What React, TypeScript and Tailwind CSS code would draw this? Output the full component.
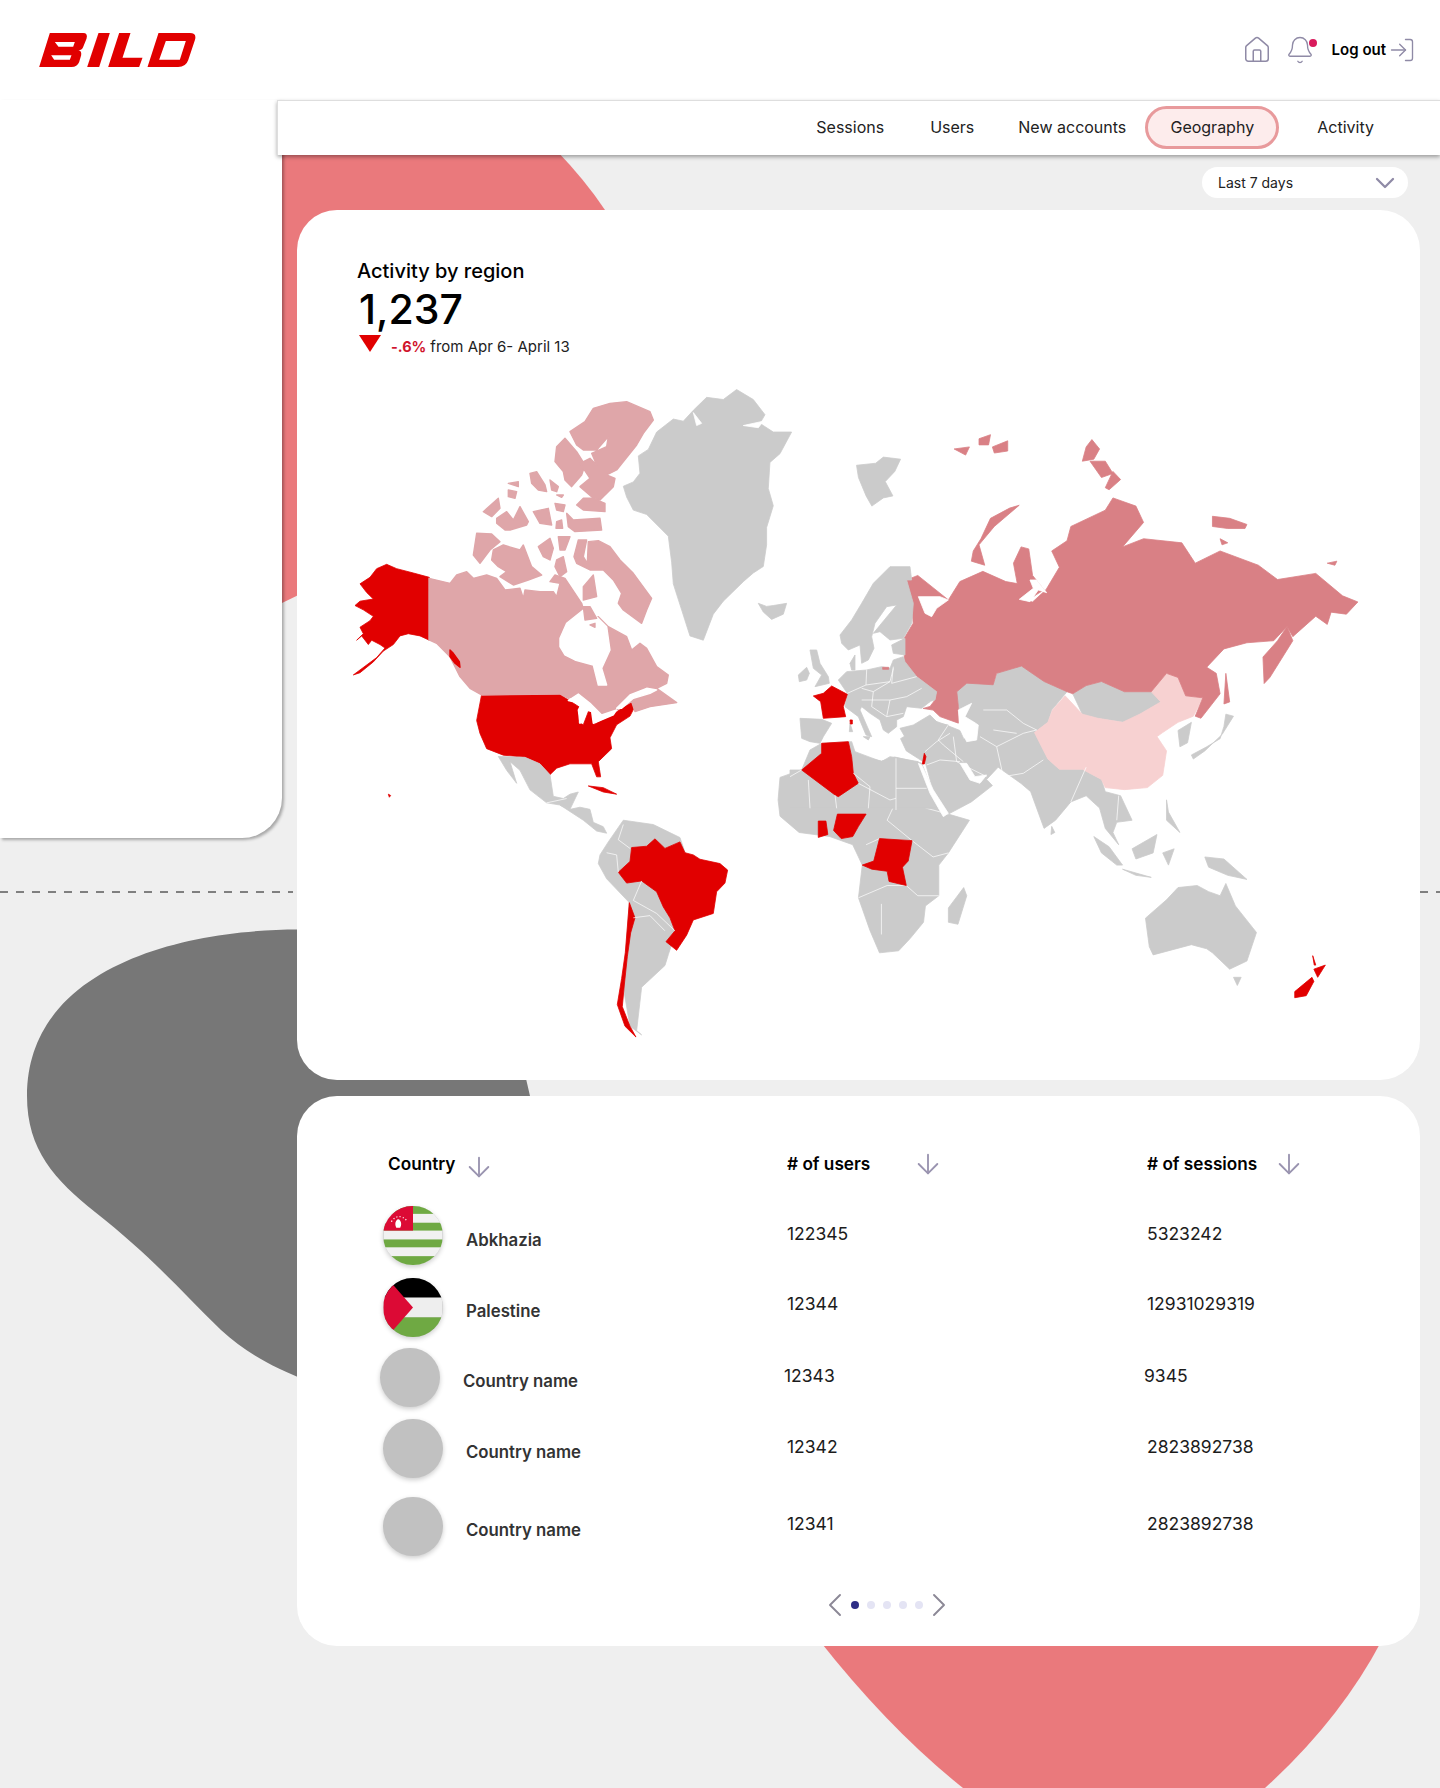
import React from "react";
import {ArrowDown, Bell, ChevronDown, ChevronLeft, ChevronRight, House, LogIn} from "lucide-react";

const RED = "#e10000";
const GREY = "#cbcbcb";
const CANADA = "#dfa6a9";
const RUSSIA = "#d98085";
const CHINA = "#f7d1d1";
const WHITE = "#ffffff";

type Shape = [string, string];

// americas + greenland
const westShapes: Shape[] = [
    [GREY, "M850 245 L880 235 L900 215 L895 175 L925 160 L950 120 L1000 90 L1030 95 L1060 70 L1100 40 L1150 45 L1190 22 L1240 45 L1275 80 L1260 100 L1300 120 L1355 120 L1320 170 L1290 190 L1285 250 L1300 290 L1280 340 L1280 380 L1270 430 L1240 445 L1210 465 L1150 510 L1120 540 L1090 600 L1050 590 L1025 530 L1000 470 L995 420 L985 360 L920 310 L880 300 L860 270 Z"],
    [WHITE, "M1060 75 L1085 100 L1070 105 Z"],
    [WHITE, "M1210 105 L1270 95 L1255 110 Z"],
    [GREY, "M1255 515 L1280 522 L1300 520 L1340 515 L1330 540 L1295 552 L1270 535 Z"],
    // alaska
    [RED, "M268 455 L268 600 L240 590 L205 585 L180 590 L160 610 L130 625 L100 650 L60 675 L40 680 L75 660 L110 640 L135 618 L120 610 L95 600 L85 610 L65 590 L50 600 L70 585 L60 570 L90 555 L100 545 L70 530 L45 520 L60 510 L100 505 L80 490 L60 470 L90 455 L110 435 L140 425 L170 435 L220 445 Z"],
    // usa
    [RED, "M425 725 L660 725 L690 740 L720 755 L715 790 L730 795 L750 755 L780 775 L760 795 L820 770 L870 745 L890 745 L870 775 L830 795 L810 825 L815 850 L775 880 L782 915 L770 915 L755 885 L690 885 L650 895 L630 910 L600 885 L555 870 L490 865 L440 850 L420 815 L410 785 Z"],
    [RED, "M745 936 L790 940 L830 955 L790 950 Z"],
    [RED, "M145 955 L152 958 L148 962 Z"],
    // mexico and central america
    [GREY, "M475 868 L555 870 L600 885 L630 910 L640 960 L670 965 L690 955 L715 950 L690 990 L660 980 L620 975 L570 945 L540 900 L510 880 L530 930 L500 900 Z"],
    [GREY, "M660 980 L690 990 L720 985 L750 990 L760 1020 L790 1030 L800 1045 L770 1040 L730 1015 Z"],
    // south america
    [GREY, "M780 1095 L805 1065 L850 1015 L940 1025 L1020 1055 L1040 1100 L1000 1290 L985 1325 L975 1350 L905 1400 L890 1500 L905 1510 L870 1490 L850 1400 L868 1205 L800 1150 L775 1115 Z"],
    [RED, "M835 1135 L870 1110 L875 1078 L920 1075 L945 1058 L975 1080 L1020 1065 L1035 1090 L1060 1095 L1080 1105 L1140 1115 L1163 1130 L1155 1160 L1130 1180 L1120 1230 L1060 1245 L1040 1280 L1010 1315 L978 1295 L1005 1270 L990 1240 L970 1215 L950 1180 L905 1155 L860 1160 Z"],
    [RED, "M868 1205 L885 1240 L872 1275 L862 1330 L853 1395 L847 1445 L870 1490 L888 1515 L855 1490 L832 1440 L845 1380 L856 1320 Z"],
];

const westLines = [
    "M850 1025 L835 1060 L870 1080",
    "M800 1090 L830 1095 L835 1135",
    "M905 1155 L880 1200 L950 1230 L1005 1270",
    "M880 1240 L930 1235 L975 1270",
    "M620 975 L680 965",
];

// canada, from the closer crop
const canadaShapes: Shape[] = [
    [CANADA, "M-63 565 L0 580 L20 555 L50 545 L70 565 L110 555 L140 565 L165 600 L210 595 L220 625 L225 600 L270 605 L310 605 L320 620 L330 580 L300 575 L315 555 L345 565 L395 640 L410 690 L445 680 L475 710 L530 740 L545 780 L570 760 L590 775 L620 830 L655 855 L650 880 L620 895 L680 938 L600 950 L555 965 L545 935 L500 960 L455 975 L420 945 L385 915 L355 925 L330 912 L95 915 L60 895 L30 860 L0 800 L-40 760 L-63 750 Z"],
    [WHITE, "M330 745 L350 700 L400 660 L440 680 L470 710 L480 780 L455 835 L470 885 L445 885 L430 825 L375 810 L345 795 L330 770 Z"],
    [WHITE, "M500 955 L540 915 L590 895 L620 900 L600 910 L550 925 L515 955 Z"],
    [CANADA, "M80 430 L125 432 L150 455 L120 480 L90 520 L70 495 Z"],
    [CANADA, "M130 480 L160 465 L210 480 L220 465 L245 530 L275 555 L235 570 L190 585 L150 560 L170 545 L145 530 L125 510 Z"],
    [CANADA, "M265 470 L300 445 L310 475 L300 510 L280 500 Z"],
    [CANADA, "M325 440 L360 440 L345 480 L330 480 Z"],
    [CANADA, "M372 500 L385 450 L410 450 L400 500 L412 520 L415 455 L445 452 L480 470 L510 510 L550 550 L605 625 L590 660 L575 700 L520 660 L505 640 L515 610 L490 570 L460 540 L420 540 L380 520 Z"],
    [CANADA, "M320 510 L340 500 L350 545 L330 560 L315 530 Z"],
    [CANADA, "M400 590 L430 555 L440 620 L400 630 Z"],
    [CANADA, "M400 650 L420 650 L440 685 L405 690 Z"],
    [CANADA, "M420 705 L435 700 L435 712 Z"],
    [CANADA, "M100 365 L145 325 L150 355 L125 380 Z"],
    [CANADA, "M140 385 L170 365 L190 390 L210 350 L235 395 L230 405 L180 420 L165 420 L140 400 Z"],
    [CANADA, "M250 365 L295 355 L305 405 L270 400 Z"],
    [CANADA, "M315 340 L345 345 L340 365 L320 360 Z"],
    [CANADA, "M320 395 L335 390 L338 415 L318 415 Z"],
    [CANADA, "M350 370 L370 390 L450 385 L455 420 L375 425 L355 410 Z"],
    [CANADA, "M175 280 L205 275 L205 290 Z"],
    [CANADA, "M175 300 L200 305 L195 325 L175 320 Z"],
    [CANADA, "M240 250 L260 245 L285 285 L290 305 L265 300 L245 280 Z"],
    [CANADA, "M300 270 L325 290 L320 305 L305 300 Z"],
    [CANADA, "M320 315 L340 315 L335 322 Z"],
    [CANADA, "M315 215 L320 170 L345 145 L380 185 L405 225 L395 255 L365 290 L345 270 L340 245 Z"],
    [CANADA, "M360 125 L405 95 L430 55 L480 40 L530 35 L600 65 L610 90 L580 130 L560 165 L500 240 L470 255 L495 265 L490 290 L450 330 L430 325 L390 290 L420 265 L390 220 L420 205 L440 225 L425 190 L470 170 L475 140 L440 180 L400 180 L380 165 Z"],
    [CANADA, "M380 345 L400 325 L430 325 L465 340 L465 365 L400 360 Z"],
    [WHITE, "M355 932 L385 912 L420 940 L455 975 L500 960 L490 975 L430 1000 L425 965 L395 955 L390 1000 L385 960 L395 940 Z"],
    [RED, "M0 780 L10 790 L28 815 L30 832 L15 820 L0 800 Z"],
];

// asia, russia, africa, oceania
const eastShapes: Shape[] = [
    [GREY, "M200 160 L250 155 L270 140 L315 145 L300 175 L275 200 L295 235 L270 240 L240 260 L225 235 L205 190 Z"],
    [GREY, "M465 710 L490 690 L560 690 L570 665 L630 650 L670 670 L690 690 L750 715 L710 760 L700 790 L665 815 L700 880 L730 905 L790 905 L840 930 L850 960 L890 970 L905 1000 L920 1030 L880 1035 L870 1060 L885 1090 L850 1050 L835 1000 L800 970 L760 985 L720 1030 L690 1050 L655 960 L630 940 L570 900 L540 930 L555 945 L500 985 L440 1015 L410 990 L380 890 L330 860 L315 830 L350 810 L400 785 L430 795 L470 810 L480 830 L510 835 L510 790 L470 770 L460 720 Z"],
    [GREY, "M765 720 L800 700 L840 690 L900 715 L975 715 L995 740 L940 770 L900 790 L830 780 L790 770 Z"],
    [CHINA, "M665 815 L700 790 L712 760 L745 725 L790 770 L830 780 L895 790 L940 770 L995 740 L970 715 L1010 670 L1040 680 L1060 725 L1105 730 L1080 775 L1040 790 L1000 815 L985 825 L1010 860 L1000 920 L960 950 L900 955 L850 950 L840 930 L790 905 L730 905 L700 880 Z"],
    [GREY, "M1040 810 L1075 790 L1065 840 L1045 850 Z"],
    [GREY, "M1075 870 L1115 850 L1150 830 L1160 800 L1165 770 L1185 775 L1155 820 L1110 860 L1080 880 Z"],
    [RUSSIA, "M331 441 L360 430 L400 460 L440 490 L470 445 L530 420 L590 445 L620 450 L610 400 L630 360 L650 365 L660 430 L690 465 L665 480 L630 490 L660 495 L695 465 L730 410 L710 370 L750 345 L760 310 L850 270 L870 240 L930 260 L950 300 L895 360 L950 340 L1050 350 L1085 400 L1150 370 L1250 405 L1300 440 L1400 425 L1470 480 L1510 495 L1480 525 L1440 520 L1430 550 L1400 530 L1340 580 L1325 555 L1290 590 L1220 595 L1160 610 L1115 655 L1140 670 L1150 720 L1100 780 L1085 775 L1105 730 L1060 725 L1040 680 L1010 670 L970 715 L900 715 L840 690 L800 700 L765 720 L750 715 L690 690 L631 652 L566 670 L557 698 L488 694 L462 715 L466 751 L466 792 L418 776 L400 760 L374 756 L392 751 L405 735 L409 715 L357 678 L326 645 L322 588 L348 547 L344 498 Z"],
    [RUSSIA, "M1325 555 L1340 590 L1280 680 L1265 695 L1262 630 L1300 590 Z"],
    [RUSSIA, "M1165 670 L1175 740 L1160 745 Z"],
    [RUSSIA, "M625 258 L600 265 L550 290 L525 340 L505 370 L500 395 L535 405 L520 355 L560 310 Z"],
    [RUSSIA, "M815 97 L835 120 L820 145 L790 150 L800 115 Z"],
    [RUSSIA, "M810 150 L850 150 L870 180 L840 190 Z"],
    [RUSSIA, "M870 175 L890 195 L860 220 L850 215 Z"],
    [RUSSIA, "M1130 285 L1175 290 L1220 305 L1215 315 L1170 315 L1130 310 Z"],
    [RUSSIA, "M1150 340 L1170 350 L1155 355 Z"],
    [RUSSIA, "M455 120 L495 115 L485 135 Z"],
    [RUSSIA, "M520 95 L550 85 L545 110 L520 110 Z"],
    [RUSSIA, "M555 115 L595 100 L595 125 L560 130 Z"],
    [RUSSIA, "M1430 400 L1455 395 L1450 405 Z"],
    [GREY, "M-5 980 L0 925 L60 905 L110 845 L180 840 L200 870 L265 885 L300 875 L370 890 L410 985 L440 1015 L495 1030 L440 1110 L415 1140 L415 1215 L380 1240 L375 1280 L340 1320 L310 1350 L260 1355 L235 1300 L205 1220 L215 1140 L190 1090 L130 1070 L50 1060 L0 1020 Z"],
    [GREY, "M480 1195 L488 1215 L465 1285 L440 1280 L440 1245 Z"],
    [GREY, "M710 1045 L718 1060 L708 1065 Z"],
    [GREY, "M820 1070 L860 1095 L895 1140 L880 1140 L840 1110 Z"],
    [GREY, "M920 1100 L985 1065 L975 1110 L930 1125 Z"],
    [GREY, "M895 1150 L970 1170 L930 1165 Z"],
    [GREY, "M1000 1110 L1030 1100 L1015 1140 Z"],
    [GREY, "M1110 1120 L1160 1125 L1220 1175 L1170 1165 L1120 1145 Z"],
    [GREY, "M1010 980 L1015 1010 L1045 1060 L1010 1030 Z"],
    [GREY, "M955 1270 L1010 1225 L1040 1195 L1090 1190 L1120 1205 L1150 1215 L1165 1185 L1190 1240 L1245 1305 L1220 1375 L1175 1395 L1130 1355 L1115 1345 L1075 1335 L975 1360 L965 1340 Z"],
    [GREY, "M1185 1415 L1205 1415 L1195 1435 Z"],
    [RED, "M1395 1395 L1425 1385 L1405 1415 Z"],
    [RED, "M1392 1362 L1400 1385 L1396 1385 Z"],
    [RED, "M1390 1415 L1345 1450 L1345 1465 L1375 1460 L1395 1425 Z"],
];

const eastLines = [
    "M265 1235 L265 1310",
    "M205 1220 L280 1190 L330 1190 L360 1215 L415 1215",
    "M345 1080 L400 1120 L440 1110",
    "M300 990 L280 1030 L345 1080",
    "M380 1000 L440 1015",
    "M225 1090 L260 1075",
    "M760 985 L800 900",
    "M885 970 L880 1030",
];

// europe, north africa, middle east, from the closer crop
const europeShapes: Shape[] = [
    [GREY, "M150 225 L185 180 L215 130 L250 70 L300 20 L360 20 L365 60 L350 60 L370 130 L365 190 L340 235 L300 240 L270 215 L250 220 L320 135 L290 140 L255 190 L245 230 L252 265 L235 300 L215 310 L210 255 L175 270 L155 250 Z"],
    [GREY, "M305 255 L345 235 L345 285 L310 280 Z"],
    [GREY, "M180 310 L195 285 L195 330 L185 330 Z"],
    [GREY, "M60 270 L80 270 L90 310 L115 350 L118 370 L75 380 L95 345 L70 325 Z"],
    [GREY, "M25 345 L50 322 L58 340 L50 360 L28 365 Z"],
    [GREY, "M145 360 L170 335 L230 330 L275 320 L300 325 L310 300 L340 290 L345 305 L380 350 L440 395 L435 420 L400 430 L420 425 L395 445 L350 440 L340 470 L320 480 L320 500 L295 520 L280 510 L270 480 L240 460 L215 440 L210 450 L245 530 L228 525 L205 470 L165 440 L172 400 Z"],
    [GREY, "M30 475 L95 478 L125 490 L100 530 L90 550 L60 545 L35 535 Z"],
    [GREY, "M220 530 L240 530 L235 540 Z"],
    [GREY, "M180 490 L188 515 L178 515 Z"],
    [GREY, "M330 505 L370 495 L420 465 L445 490 L475 495 L480 515 L460 530 L400 545 L350 540 Z"],
    [GREY, "M0 630 L35 630 L60 570 L95 550 L185 545 L195 575 L275 605 L300 590 L385 605 L460 745 L0 745 Z"],
    [WHITE, "M505 450 L545 430 L525 470 L565 495 L560 540 L530 545 L510 500 Z"],
    [WHITE, "M385 610 L395 615 L430 690 L475 760 L460 770 L420 700 Z"],
    [WHITE, "M510 610 L530 610 L555 650 L590 645 L570 670 L540 660 Z"],
    [WHITE, "M385 110 L450 110 L475 120 L440 145 L425 170 L405 160 Z"],
    [WHITE, "M688 118 L730 85 L720 60 L740 60 L770 98 L745 90 L720 125 Z"],
    [RUSSIA, "M278 322 L296 322 L296 328 L278 328 Z"],
    [RED, "M35 630 L95 580 L95 550 L175 545 L185 590 L190 640 L205 670 L145 710 L135 705 Z"],
    [RED, "M70 408 L100 400 L125 378 L172 403 L160 440 L167 470 L100 475 L92 425 Z"],
    [RED, "M180 480 L187 480 L187 492 L181 492 Z"],
    [RED, "M397 612 L403 580 L408 590 L403 612 Z"],
];

const europeLines = [
    "M230 330 L228 375 L300 365 L310 325",
    "M310 320 L305 370 L380 350",
    "M172 400 L228 375",
    "M215 385 L250 395 L300 365",
    "M215 420 L300 420 L350 410 L395 385",
    "M250 395 L245 440 L290 470 L340 460",
    "M300 420 L290 470",
    "M475 495 L445 540 L460 555 L520 605",
    "M405 575 L440 545 L480 520",
    "M410 615 L450 600 L510 605",
    "M490 530 L500 605 L590 650",
    "M570 530 L620 560 L640 650",
    "M620 560 L700 520 L740 510",
    "M640 650 L700 640 L760 600",
    "M580 450 L650 450 L700 490 L740 510",
    "M610 510 L680 520",
    "M318 595 L318 750",
    "M318 685 L410 685",
    "M205 670 L300 720 L318 715",
    "M0 650 L35 630",
    "M55 660 L60 745",
    "M190 640 L240 680 L235 745",
    "M135 705 L140 745",
];

// drawn after the europe crop so its north africa patch can't cover them
const africaTopShapes: Shape[] = [
    [RED, "M150 1015 L225 1015 L205 1045 L190 1070 L160 1075 L140 1055 Z"],
    [RED, "M100 1032 L120 1032 L125 1065 L100 1072 Z"],
    [RED, "M260 1075 L345 1080 L335 1130 L320 1145 L330 1190 L285 1180 L280 1155 L240 1150 L215 1140 L245 1130 Z"],
];

const MapLand = ({shapes, lines = [], transform, edge = 0.4}: { shapes: Shape[], lines?: string[], transform: string, edge?: number }) => (
    <g transform={transform}>
        {shapes.map(([fill, d], i) => (
            <path key={i} d={d} fill={fill} stroke={fill} strokeWidth={edge} strokeLinejoin="round"
                  vectorEffect="non-scaling-stroke"/>
        ))}
        {lines.map((d, i) => (
            <path key={i} d={d} fill="none" stroke="#ffffff" strokeWidth={0.7} vectorEffect="non-scaling-stroke"/>
        ))}
    </g>
);

const WorldMap = () => (
    <svg viewBox="340 380 1050 680" className="block ml-[43px] w-[1050px] h-[680px]">
        <MapLand shapes={westShapes} lines={westLines} transform="translate(340 380) scale(0.3333 0.4337)" edge={0.8}/>
        <MapLand shapes={canadaShapes} transform="translate(450 390) scale(0.3333)" edge={1.4}/>
        <MapLand shapes={eastShapes} lines={eastLines} transform="translate(780 400) scale(0.3827 0.408)" edge={0.8}/>
        <MapLand shapes={europeShapes} lines={europeLines} transform="translate(790 560) scale(0.3333)" edge={0.8}/>
        <MapLand shapes={africaTopShapes} transform="translate(780 400) scale(0.3827 0.408)" edge={0.8}/>
    </svg>
);

const Logo = () => (
    <svg viewBox="118 98 470 102" className="block w-[157px] h-[34px]" role="img" aria-label="BILD">
        <path fill={RED} fillRule="evenodd"
              d="M118 200 L150 98 L250 98 Q265 98 260 115 L250 140 Q246 150 236 150 Q246 152 244 165 L238 185 Q232 200 215 200 Z M165 125 L176 139 L220 139 L225 125 Z M154 165 L163 178 L210 178 L215 165 Z"/>
        <path fill={RED} d="M262 200 L296 98 L330 98 L298 200 Z"/>
        <path fill={RED} d="M325 200 L358 98 L392 98 L368 172 L428 172 L418 200 Z"/>
        <path fill={RED} fillRule="evenodd"
              d="M443 200 L476 98 L570 98 Q592 98 585 120 L565 180 Q558 200 535 200 Z M498 122 L478 178 L540 178 L558 122 Z"/>
    </svg>
);

const AbkhaziaFlag = () => (
    <svg viewBox="0 0 60 60" className="w-full h-full">
        <rect width="60" height="60" fill="#f1f1f1"/>
        <rect y="0" width="60" height="8" fill="#6fa943"/>
        <rect y="17" width="60" height="8" fill="#6fa943"/>
        <rect y="34" width="60" height="8" fill="#6fa943"/>
        <rect y="51" width="60" height="9" fill="#6fa943"/>
        <rect width="30" height="25" fill="#dc0a35"/>
        <path d="M17 22 L13 22 Q11 18 13 15 Q15 12 17 15 Q19 18 17 22 Z" fill="#ffffff"/>
        <path d="M8 16 Q15 6 24 15" fill="none" stroke="#ffffff" strokeWidth="1.2" strokeDasharray="1.2 2.2"/>
    </svg>
);

const PalestineFlag = () => (
    <svg viewBox="0 0 60 60" className="w-full h-full">
        <rect width="60" height="20" fill="#000000"/>
        <rect y="20" width="60" height="20" fill="#eeeeee"/>
        <rect y="40" width="60" height="20" fill="#6fa943"/>
        <path d="M0 6 L9 6 L30 30 L9 54 L0 54 Z" fill="#dc0a35"/>
    </svg>
);

const rows = [
    {name: "Abkhazia", users: "122345", sessions: "5323242", flag: <AbkhaziaFlag/>, cls: "mt-[30px]", namePad: "pt-[22px]", numPad: "pt-[16px]"},
    {name: "Palestine", users: "12344", sessions: "12931029319", flag: <PalestineFlag/>, cls: "mt-[13px]", namePad: "pt-[21px]", numPad: "pt-[14px]"},
    {name: "Country name", users: "12343", sessions: "9345", cls: "mt-[11px] -ml-[3px]", namePad: "pt-[21px]", numPad: "pt-[16px]"},
    {name: "Country name", users: "12342", sessions: "2823892738", cls: "mt-[12px]", namePad: "pt-[21px]", numPad: "pt-[16px]"},
    {name: "Country name", users: "12341", sessions: "2823892738", cls: "mt-[19px]", namePad: "pt-[21px]", numPad: "pt-[15px]"},
];

const navItems = [
    {label: "Sessions", cls: ""},
    {label: "Users", cls: "ml-[46px]"},
    {label: "New accounts", cls: "ml-[44px]"},
    {label: "Geography", cls: "ml-[19px] flex items-center justify-center w-[134px] h-[43px] rounded-full bg-[#fdecec] border-[3px] border-[#e89a9c]"},
    {label: "Activity", cls: "ml-[38px]"},
];

const SortHead = ({label, cls}: { label: string, cls: string }) => (
    <div className="flex items-center h-[24px]">
        <span className="text-[17.2px] font-semibold text-black leading-[24px]">{label}</span>
        <ArrowDown size={32} strokeWidth={1.4} className={`shrink-0 text-[#9a94b0] ${cls}`}/>
    </div>
);

export default function App() {
    return (
        <div className="relative w-[1440px] h-[1788px] overflow-hidden bg-[#efefef]"
             style={{fontFamily: "Inter, 'Liberation Sans', sans-serif"}}>

            {/* background shapes + dashed guide */}
            <svg viewBox="0 0 1440 1788" className="absolute inset-0 w-[1440px] h-[1788px]">
                <path d="M282 150 L556 150 Q585 180 605 210 L700 400 L282 603 Z" fill="#ea797c"/>
                <path d="M819 1640 Q890 1730 963 1788 L1265 1788 Q1340 1720 1382 1640 Z" fill="#ea797c"/>
                <path
                    d="M320 930 C200 925 27 960 27 1096 C27 1150 55 1180 95 1212 C150 1255 180 1290 221 1330 C245 1352 270 1366 310 1382 L340 1300 L530 1096 L524 1070 L320 1000 Z"
                    fill="#777777"/>
                <path d="M0 892 L293 892 M1420 892 L1440 892" stroke="#111111" strokeWidth="1" strokeDasharray="8 8"/>
            </svg>

            <header className="relative flex items-center justify-between h-[100px] bg-white pl-[39px] pr-[24px]">
                <div className="-mt-[1px]"><Logo/></div>
                <div className="flex items-center">
                    <House size={30} strokeWidth={1.2} className="text-[#8f8aa6]"/>
                    <div className="relative ml-[13px]">
                        <Bell size={30} strokeWidth={1.1} className="text-[#8f8aa6]"/>
                        <span className="absolute top-[4px] -right-[2px] w-[8px] h-[8px] rounded-full bg-[#d91b5c]"/>
                    </div>
                    <span className="ml-[17px] text-[15px] font-semibold text-black">Log out</span>
                    <LogIn size={28} strokeWidth={1.15} className="ml-[2px] text-[#8f8aa6]"/>
                </div>
            </header>

            <div className="relative flex">
                <aside className="shrink-0 w-[282px] h-[738px] bg-white rounded-br-[40px] shadow-[2px_2px_3px_rgba(0,0,0,0.3)]"/>

                <main className="w-[1163px] -ml-[5px]">
                    <nav
                        className="relative z-10 flex items-center justify-end h-[55px] pb-[2px] bg-white border-t border-l border-[#dedede] shadow-[0_2px_4px_rgba(0,0,0,0.35)] pr-[66px] text-[16px] text-[#222222]">
                        {navItems.map((item) => (
                            <span key={item.label} className={item.cls}>{item.label}</span>
                        ))}
                    </nav>

                    <div className="pl-[20px]">
                        <div className="flex justify-end pr-[32px] mt-[12px]">
                            <div
                                className="flex items-center justify-between w-[206px] h-[31px] rounded-full bg-white pl-[16px] pr-[7px] text-[14px] text-[#222222]">
                                Last 7 days
                                <ChevronDown size={32} strokeWidth={1.7} className="text-[#8f8aa6]"/>
                            </div>
                        </div>

                        <section className="w-[1123px] h-[870px] mt-[12px] bg-white rounded-[40px] pt-[47px]">
                            <div className="pl-[60px]">
                                <h2 className="text-[20px] leading-[28px] font-medium text-black">Activity by region</h2>
                                <div className="text-[41px] leading-[44px] mt-[2px] pl-[2px] font-medium text-black">1,237</div>
                                <div className="flex items-start h-[24px] mt-[4px] pl-[2px]">
                                    <svg viewBox="0 0 22 17" className="w-[22px] h-[17px]">
                                        <path d="M0 0 L22 0 L11 17 Z" fill={RED}/>
                                    </svg>
                                    <span className="ml-[10px] text-[14.5px] leading-[24px] font-bold text-[#d0142c]">-.6%</span>
                                    <span className="ml-[4px] text-[15px] leading-[24px] text-[#222222]">from Apr 6- April 13</span>
                                </div>
                            </div>
                            <div className="mt-[21px]"><WorldMap/></div>
                        </section>

                        <section className="w-[1123px] h-[550px] mt-[16px] bg-white rounded-[40px] pl-[86px] pt-[56px]">
                            <div className="grid grid-cols-[404px_360px_1fr]">
                                <div className="pl-[5px]"><SortHead label="Country" cls="ml-[8px] mt-[5px]"/></div>
                                <SortHead label="# of users" cls="ml-[42px]"/>
                                <SortHead label="# of sessions" cls="ml-[16px]"/>
                            </div>

                            {rows.map((row, i) => (
                                <div key={i} className={`grid grid-cols-[404px_360px_1fr] h-[59px] ${row.cls}`}>
                                    <div className="flex items-start">
                                        <div
                                            className="w-[60px] h-[59px] shrink-0 rounded-full overflow-hidden bg-[#c1c1c1] shadow-[0_2px_5px_rgba(0,0,0,0.2)]">
                                            {row.flag}
                                        </div>
                                        <span className={`ml-[23px] text-[16.8px] leading-[24px] font-semibold text-[#333333] ${row.namePad}`}>{row.name}</span>
                                    </div>
                                    <div className={`text-[17.5px] leading-[24px] text-[#1c1c1c] ${row.numPad}`}>{row.users}</div>
                                    <div className={`text-[17.5px] leading-[24px] text-[#1c1c1c] ${row.numPad}`}>{row.sessions}</div>
                                </div>
                            ))}

                            <div className="flex items-center justify-center mt-[29px] -ml-[30px]">
                                <ChevronLeft size={40} strokeWidth={1.15} className="text-[#8c8896]"/>
                                <div className="flex items-center gap-[8px] -mx-[4px]">
                                    <span className="w-[8px] h-[8px] rounded-full bg-[#2e2e86]"/>
                                    <span className="w-[8px] h-[8px] rounded-full bg-[#e4e4f4]"/>
                                    <span className="w-[8px] h-[8px] rounded-full bg-[#e4e4f4]"/>
                                    <span className="w-[8px] h-[8px] rounded-full bg-[#e4e4f4]"/>
                                    <span className="w-[8px] h-[8px] rounded-full bg-[#e4e4f4]"/>
                                </div>
                                <ChevronRight size={40} strokeWidth={1.15} className="text-[#8c8896]"/>
                            </div>
                        </section>
                    </div>
                </main>
            </div>
        </div>
    );
}
